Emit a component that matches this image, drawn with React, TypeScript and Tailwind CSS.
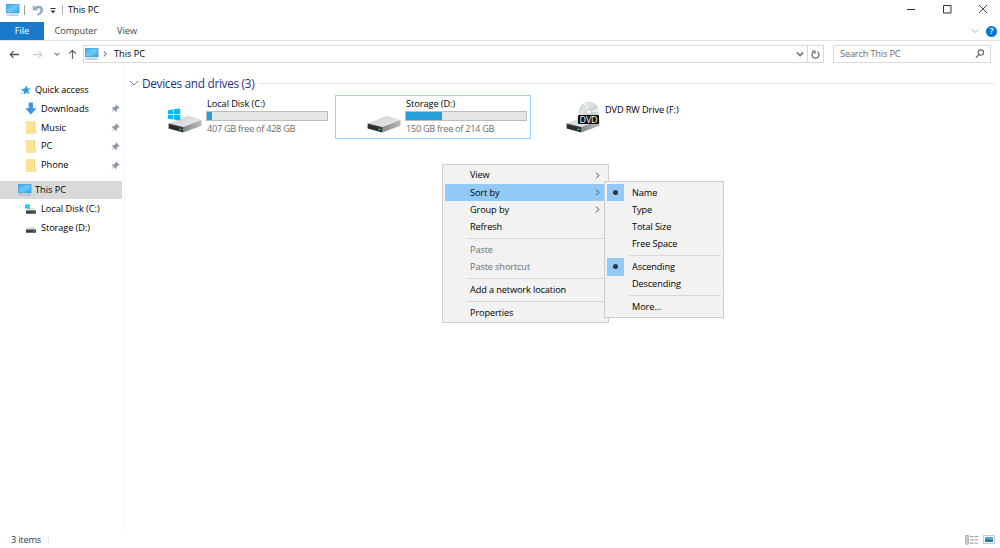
import type { ReactNode } from 'react';
import clsx from 'clsx';

type IconProps = { className?: string };

function MonitorIcon({ className }: IconProps) {
  return (
    <svg className={className} viewBox="0 0 14 13">
      <defs>
        <linearGradient id="screen" x1="0" y1="0" x2="1" y2="1">
          <stop offset="0" stopColor="#32abf2" />
          <stop offset="0.5" stopColor="#6bcbff" />
          <stop offset="1" stopColor="#23a0ef" />
        </linearGradient>
      </defs>
      <rect x="0.4" y="0.4" width="12.6" height="8.5" fill="url(#screen)" stroke="#4b9bc9" strokeWidth="0.8" />
      <path d="M5 9.3h3.5v1.2H5z" fill="#d3dde5" />
      <path d="M1.2 10.6h11l.8 1.2H.4z" fill="#a8bac8" />
    </svg>
  );
}

function UndoIcon() {
  return (
    <svg className="h-3 w-3" viewBox="0 0 12 12">
      <path d="M.8.9v5.4h5.600L4.900 4.700c1.900-1 3.600-.2 3.600 1.400 0 1.700-1.300 3-3.600 4.500l.9 1.100c3.600-1.500 5.300-3.400 5.300-6C11.100 2.300 6.900.6 3 2.900z" fill="#94a9c6" />
    </svg>
  );
}

function Chevron({ className }: IconProps) {
  return (
    <svg className={className} viewBox="0 0 10 10" fill="none" stroke="currentColor">
      <path d="M1 3l4 4 4-4" />
    </svg>
  );
}

function ArrowIcon({ className }: IconProps) {
  return (
    <svg className={className} viewBox="0 0 12 10" fill="none" stroke="currentColor" strokeWidth="1.4">
      <path d="M11 5H1.5M5 1.200L1.300 5 5 8.800" />
    </svg>
  );
}

function StarIcon() {
  return (
    <svg className="h-[11px] w-[11px]" viewBox="0 0 11 11">
      <path d="M6.400.4l.9 3 3.500-.2-2.600 2.300 1.200 3.700-3-1.600-2.600 2.200.3-3.400L.9 4.400l3.400-.6z" fill="#2e97e4" />
      <path d="M3.500 7L.4 9.600" stroke="#7cbdec" strokeWidth="1" />
    </svg>
  );
}

function DownloadIcon() {
  return (
    <svg className="h-[13px] w-3" viewBox="0 0 12 13">
      <path d="M3.700.4h4.200v5.800h3.600L5.900 12.400.3 6.200h3.400z" fill="#3a94de" />
    </svg>
  );
}

function FolderIcon() {
  return (
    <svg className="h-[13px] w-3" viewBox="0 0 12 13">
      <path d="M.9.6h9v8.300h1.300v3.700H.9z" fill="#efcb65" />
      <path d="M.9 1.200L9 .5v11.900H.9z" fill="#ffe394" />
      <path d="M9 9.200h1.300v3.300H9z" fill="#fff1bd" />
    </svg>
  );
}

function PinIcon() {
  return (
    <svg className="h-[9px] w-[9px]" viewBox="0 0 9 9">
      <path d="M5 .3L8.700 4l-.9.5-.6-.2-1.500 1.600.1 1.600-.8.5-1.900-1.900L.6 8.500l-.1-.2L2.600 5.600.9 3.900l.6-.7 1.700.1L4.800 1.700l-.2-.8z" fill="#8d9aa5" />
    </svg>
  );
}

function WindowsLogo({ className }: IconProps) {
  return (
    <svg className={className} viewBox="0 0 14 13">
      <path d="M0 1.800L5.700 1v5H0zM6.400.9L13.200 0v6H6.400zM0 6.800h5.700v5.100L0 11.100zM6.400 6.800h6.800V13l-6.800-1z" fill="#00bcf2" />
    </svg>
  );
}

function SmallDriveIcon({ system }: { system?: boolean }) {
  return (
    <div className="relative h-3 w-3">
      <svg className="h-3 w-3" viewBox="0 0 12 12">
        <path d="M2.600 5.200h6.800l1.600 2.500H1z" fill="#d7d7d9" />
        <rect x="1" y="7.5" width="10" height="3.300" rx="0.3" fill="#3c4044" />
        <rect x="8.300" y="8.800" width="1.400" height="0.9" fill="#42d75a" />
      </svg>
      {system && <WindowsLogo className="absolute top-px left-0 h-[5px] w-[5px]" />}
    </div>
  );
}

function DriveIcon() {
  return (
    <svg className="h-[18px] w-[34px]" viewBox="0 0 34 18">
      <defs>
        <linearGradient id="driveTop" x1="0" y1="0" x2="1" y2="1">
          <stop offset="0" stopColor="#cfcfd2" />
          <stop offset="1" stopColor="#ececee" />
        </linearGradient>
        <linearGradient id="driveSide" x1="0" y1="0" x2="1" y2="0">
          <stop offset="0" stopColor="#85868a" />
          <stop offset="1" stopColor="#b9babd" />
        </linearGradient>
      </defs>
      <path d="M.6 8.400L19 .9c.7-.3 1.300-.3 2 0l12.500 4.200L15.200 12z" fill="url(#driveTop)" />
      <path d="M15.200 12L33.500 5.100v5.600L15.200 17.500z" fill="url(#driveSide)" />
      <path d="M.6 8.400L15.200 12v5.500L.6 13.600z" fill="#292b2d" />
      <path d="M1.500 9.600l12.800 3.200" stroke="#5b5e61" strokeWidth="0.5" />
      <rect x="11.200" y="13.700" width="2.500" height="1.400" fill="#35c84a" />
    </svg>
  );
}

function DiscIcon() {
  return (
    <svg className="absolute top-0 left-3 h-6 w-[22px]" viewBox="0 0 22 24">
      <defs>
        <linearGradient id="disc" x1="0" y1="0" x2="1" y2="1">
          <stop offset="0" stopColor="#c6cacb" />
          <stop offset="0.35" stopColor="#e2e6e5" />
          <stop offset="0.55" stopColor="#c5d3cf" />
          <stop offset="1" stopColor="#dedfe0" />
        </linearGradient>
      </defs>
      <circle cx="11" cy="11" r="10" fill="url(#disc)" stroke="#c5c9ca" strokeWidth="0.5" />
      <path d="M11 11L5.500 2.700A10 10 0 0 1 9 1.300zM11 11l9.300-4a10 10 0 0 1 .7 4z" fill="#eaeeed" />
      <circle cx="11" cy="11" r="2.800" fill="#e9eceb" stroke="#b5bcbb" strokeWidth="0.5" />
      <circle cx="11" cy="11" r="1.100" fill="#fff" />
    </svg>
  );
}

function TitleBar() {
  return (
    <header className="flex h-[22px] items-start pt-1 pl-1.5">
      <MonitorIcon className="h-[13px] w-3.5" />
      <div className="mt-px ml-1 h-[10px] w-px bg-[#a0a0a0]" />
      <div className="ml-[7px]">
        <UndoIcon />
      </div>
      <svg className="mt-[4px] ml-[6px] h-[6px] w-[6px]" viewBox="0 0 6 6">
        <path d="M.5 0h5v1h-5zM.5 2.500h5L3 5.300z" fill="#333" />
      </svg>
      <div className="mt-px ml-[6px] h-[10px] w-px bg-[#b5b5b5]" />
      <span className="ml-[5px] leading-3">This PC</span>
      <svg className="mr-[12px] ml-auto h-[10px] w-[82px]" viewBox="0 0 82 10" fill="none" stroke="#333">
        <path d="M1 5.500h8M37.500 1.500h7.500v7.500h-7.500z" />
        <path d="M73 1l8 8M81 1l-8 8" strokeWidth="0.9" />
      </svg>
    </header>
  );
}

function RibbonTabs() {
  return (
    <nav className="flex h-[19px] items-center border-b border-[#e2e3e4] text-[#444]">
      <div className="flex h-[18px] w-11 items-center justify-center bg-[#1979ca] text-white">File</div>
      <span className="ml-[10.5px] w-10 tracking-[-0.08px]">Computer</span>
      <span className="ml-[22.5px]">View</span>
      <Chevron className="mr-[7px] ml-auto h-2 w-2 text-[#999]" />
      <div className="mr-[3px] flex h-[11px] w-[11px] items-center justify-center rounded-full bg-[#0078d7] text-[9px] font-semibold text-white">?</div>
    </nav>
  );
}

function AddressBar() {
  return (
    <div className="flex h-[26px] items-center pl-[9px]">
      <ArrowIcon className="h-[9px] w-[11px] text-[#555]" />
      <ArrowIcon className="ml-[12px] h-[9px] w-[11px] rotate-180 text-[#d2d2d2]" />
      <Chevron className="ml-[11px] h-[6px] w-[6px] stroke-[1.8] text-[#777]" />
      <ArrowIcon className="ml-[7px] h-[9px] w-[11px] rotate-90 text-[#666]" />
      <div className="ml-[5px] flex h-[18px] w-[741px] items-center border border-[#d9d9d9]">
        <MonitorIcon className="ml-px h-[13px] w-3.5" />
        <Chevron className="ml-[3px] h-[6px] w-[6px] -rotate-90 stroke-[1.7] text-[#777]" />
        <span className="ml-[6px]">This PC</span>
        <Chevron className="mr-[3px] ml-auto h-2 w-2 stroke-2 text-[#777]" />
        <div className="flex h-4 w-4 items-center justify-center border-l border-[#d9d9d9]">
          <svg className="h-[9px] w-[9px]" viewBox="0 0 9 9" fill="none" stroke="#666" strokeWidth="1.200">
            <path d="M6.300 1.700A3.500 3.500 0 1 1 2.600 1.800M1.300 1h2.700v2.700" />
          </svg>
        </div>
      </div>
      <div className="ml-[9px] flex h-[18px] w-[158px] items-center border border-[#d9d9d9] pl-[6px] text-[#6d6d6d]">
        <span className="tracking-[-0.15px]">Search This PC</span>
        <svg className="mr-[5px] ml-auto h-[10px] w-[10px]" viewBox="0 0 10 10" fill="none" stroke="#666" strokeWidth="1.100">
          <circle cx="5.900" cy="3.600" r="2.700" />
          <path d="M4 5.500L.8 8.800" />
        </svg>
      </div>
    </div>
  );
}

const quickAccess = [
  { label: 'Downloads', icon: <DownloadIcon /> },
  { label: 'Music', icon: <FolderIcon /> },
  { label: 'PC', icon: <FolderIcon /> },
  { label: 'Phone', icon: <FolderIcon /> },
];

function Sidebar() {
  return (
    <aside className="w-[125px] shrink-0 border-r border-[#f4f4f4] pt-[14px]">
      <div className="flex h-[18.5px] items-center pl-5">
        <StarIcon />
        <span className="ml-1 tracking-[-0.08px]">Quick access</span>
      </div>
      {quickAccess.map((item) => (
        <div key={item.label} className="flex h-[18.8px] items-center pr-1 pl-[25px]">
          {item.icon}
          <span className="ml-1">{item.label}</span>
          <div className="ml-auto">
            <PinIcon />
          </div>
        </div>
      ))}
      <div className="mt-[6.3px] flex h-[18px] w-[122px] items-center bg-[#d9d9d9] pl-[18px]">
        <MonitorIcon className="mt-px h-[13px] w-3.5" />
        <span className="ml-[3px]">This PC</span>
      </div>
      <div className="mt-[0.5px] flex h-[19px] items-center pl-[25px]">
        <SmallDriveIcon system />
        <span className="ml-1">Local Disk (C:)</span>
      </div>
      <div className="flex h-[19px] items-center pl-[25px]">
        <SmallDriveIcon />
        <span className="ml-1 tracking-[-0.08px]">Storage (D:)</span>
      </div>
    </aside>
  );
}

type DriveProps = {
  name: string;
  free: string;
  usedWidth: string;
  system?: boolean;
  focused?: boolean;
};

function Drive({ name, free, usedWidth, system, focused }: DriveProps) {
  return (
    <div className={clsx('flex h-11 w-[196px] border pl-[31px]', focused ? 'border-[#99d1ff]' : 'border-transparent')}>
      <div className="relative mt-[19px] h-[18px] w-[34px]">
        <DriveIcon />
        {system && <WindowsLogo className="absolute -top-[7px] left-0 h-[13px] w-[13px]" />}
      </div>
      <div className="ml-1 pt-[2px]">
        <div className="h-[13px] pl-px leading-3 tracking-[-0.05px]">{name}</div>
        <div className="h-[10px] w-[122px] border border-[#bcbcbc] bg-[#e6e6e6]">
          <div className={clsx('h-full bg-[#26a0da]', usedWidth)} />
        </div>
        <div className="pl-px leading-[15px] tracking-[-0.3px] text-[#6d6d6d]">{free}</div>
      </div>
    </div>
  );
}

function DvdDrive() {
  return (
    <div className="flex h-11 w-[196px] border border-transparent pl-[31px]">
      <div className="relative mt-[5px] h-8 w-[34px]">
        <DiscIcon />
        <div className="absolute top-[14px] left-0">
          <DriveIcon />
        </div>
        <div className="absolute top-[14px] left-[12px] flex h-[9px] w-[21px] items-center justify-center rounded-[1px] bg-[#111] text-[9px] tracking-[-0.2px] text-white">DVD</div>
      </div>
      <span className="ml-[5px] pt-[7px] leading-[14px] tracking-[-0.1px]">DVD RW Drive (F:)</span>
    </div>
  );
}

type MenuRowProps = {
  children: ReactNode;
  active?: boolean;
  disabled?: boolean;
  arrow?: boolean;
};

function MenuRow({ children, active, disabled, arrow }: MenuRowProps) {
  return (
    <div className={clsx('flex h-[17.25px] items-center pr-[5px] pl-[25px]', active && 'bg-[#91c9f7]', disabled && 'text-[#6d6d6d]')}>
      <span>{children}</span>
      {arrow && <Chevron className="ml-auto h-[7px] w-[7px] -rotate-90 stroke-[1.4] text-[#444]" />}
    </div>
  );
}

function Separator() {
  return <div className="my-[2.3px] ml-[22px] h-px bg-[#d7d7d7]" />;
}

function ContextMenu() {
  return (
    <div className="absolute top-[164px] left-[442px] h-[159px] w-[167px] border border-[#ccc] bg-[#f2f2f2] px-[2px] pt-[1.8px] tracking-[-0.12px]">
      <MenuRow arrow>View</MenuRow>
      <MenuRow arrow active>Sort by</MenuRow>
      <MenuRow arrow>Group by</MenuRow>
      <MenuRow>Refresh</MenuRow>
      <Separator />
      <MenuRow disabled>Paste</MenuRow>
      <MenuRow disabled>Paste shortcut</MenuRow>
      <Separator />
      <MenuRow>Add a network location</MenuRow>
      <Separator />
      <MenuRow>Properties</MenuRow>
    </div>
  );
}

function SortRow({ children, checked }: { children: ReactNode; checked?: boolean }) {
  return (
    <div className="flex h-[17.2px] items-center">
      <div className={clsx('flex h-full w-[17px] items-center justify-center', checked && 'bg-[#91c9f7]')}>
        {checked && <div className="mr-px h-[5px] w-[5px] rounded-full bg-[#333]" />}
      </div>
      <span className="ml-2">{children}</span>
    </div>
  );
}

function SortMenu() {
  return (
    <div className="absolute top-[181px] left-[604px] h-[137px] w-[120px] border border-[#ccc] bg-[#f2f2f2] px-[2px] pt-[2px] tracking-[-0.12px]">
      <SortRow checked>Name</SortRow>
      <SortRow>Type</SortRow>
      <SortRow>Total Size</SortRow>
      <SortRow>Free Space</SortRow>
      <Separator />
      <SortRow checked>Ascending</SortRow>
      <SortRow>Descending</SortRow>
      <Separator />
      <SortRow>More...</SortRow>
    </div>
  );
}

function StatusBar() {
  return (
    <footer className="flex h-[17px] items-center pr-[5px] pl-[11px] text-[#1e395b]">
      <span className="tracking-[-0.2px]">3 items</span>
      <div className="ml-[7px] h-2 w-px bg-[#eee]" />
      <svg className="ml-auto h-[10px] w-[13px]" viewBox="0 0 13 10">
        <path d="M.5.5h3v2.300h-3zM.5 3.700h3V6h-3zM.5 6.900h3v2.300h-3z" fill="#ddd" stroke="#999" strokeWidth="0.7" />
        <path d="M5 1.600h3.500M9.500 1.600H13M5 4.900h3.500M9.500 4.900H13M5 8.100h3.500M9.500 8.100H13" stroke="#888" strokeWidth="0.9" />
      </svg>
      <svg className="ml-[5px] h-[9px] w-3" viewBox="0 0 12 9">
        <rect x="0.5" y="0.5" width="11" height="8" fill="#fff" stroke="#c3cad1" />
        <path d="M2 2h8v5H2z" fill="#4ba3e6" />
        <path d="M2 4.600c3-1.400 5 .8 8 .7V7H2z" fill="#3a6f95" />
      </svg>
    </footer>
  );
}

export default function App() {
  return (
    <div className="relative flex h-[548px] w-[1000px] flex-col overflow-hidden bg-white font-['Open_Sans','Noto_Sans',sans-serif] text-[9.2px] leading-3 whitespace-nowrap text-black">
      <TitleBar />
      <RibbonTabs />
      <AddressBar />
      <div className="flex min-h-0 flex-1">
        <Sidebar />
        <main className="flex-1 pt-2">
          <div className="flex h-4 items-center pr-1.5 pl-1">
            <Chevron className="h-[10px] w-[10px] text-[#888]" />
            <h1 className="ml-[3px] w-[114px] text-[11.8px] tracking-[-0.3px] text-[#1e3287]">Devices and drives (3)</h1>
            <div className="ml-1 h-px flex-1 bg-[#e2e2e2]" />
          </div>
          <div className="mt-1 flex gap-[3px] pl-[11px]">
            <Drive name="Local Disk (C:)" free="407 GB free of 428 GB" usedWidth="w-[5px]" system />
            <Drive name="Storage (D:)" free="150 GB free of 214 GB" usedWidth="w-[36px]" focused />
            <DvdDrive />
          </div>
        </main>
      </div>
      <StatusBar />
      <ContextMenu />
      <SortMenu />
    </div>
  );
}
